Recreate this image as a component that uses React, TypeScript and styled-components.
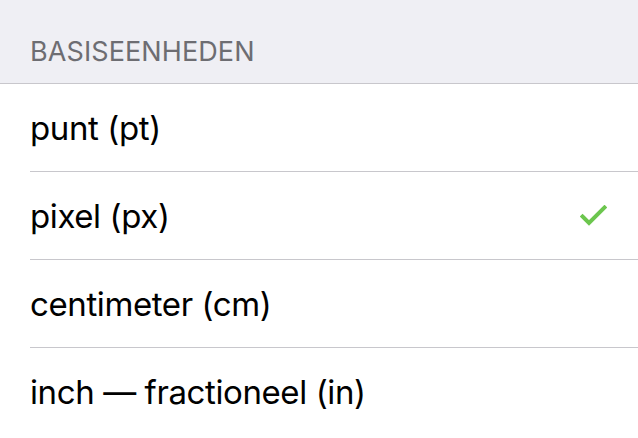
import React from "react";
import styled, { createGlobalStyle } from "styled-components";

const Global = createGlobalStyle`
  html, body {
    margin: 0;
    padding: 0;
    background: #ffffff;
  }
  body {
    font-family: Inter, "Liberation Sans", Arial, sans-serif;
    -webkit-font-smoothing: antialiased;
  }
`;

const Screen = styled.div`
  width: 638px;
  height: 438px;
  overflow: hidden;
  background: #ffffff;
`;

const SectionHeader = styled.div`
  height: 84px;
  box-sizing: border-box;
  background: #efeff4;
  border-bottom: 1px solid #c8c7cc;
  padding: 0 30px 15px;
  display: flex;
  align-items: flex-end;
  font-size: 27px;
  letter-spacing: 0.1px;
  color: #6d6d72;
  text-transform: uppercase;
`;

const List = styled.ul`
  list-style: none;
  margin: 0;
  padding: 0 0 0 30px;
  background: #ffffff;
`;

const Row = styled.li`
  height: 88px;
  box-sizing: border-box;
  display: flex;
  align-items: center;
  justify-content: space-between;
  padding-right: 31px;
  border-bottom: 1px solid #c8c7cc;
  &:last-child {
    border-bottom: none;
  }
`;

const Label = styled.span`
  font-size: 33px;
  letter-spacing: -0.4px;
  color: #000000;
`;

const Check = () => (
  <svg width="27" height="21" viewBox="0 0 27 21" fill="none">
    <path
      d="M2.5 11.5 L9 18 L24.5 2.5"
      stroke="#6cc64e"
      strokeWidth="4"
      strokeLinecap="square"
    />
  </svg>
);

const units = [
  { label: "punt (pt)", selected: false },
  { label: "pixel (px)", selected: true },
  { label: "centimeter (cm)", selected: false },
  { label: "inch — fractioneel (in)", selected: false },
];

export default function App() {
  return (
    <Screen>
      <Global />
      <SectionHeader>Basiseenheden</SectionHeader>
      <List>
        {units.map((u) => (
          <Row key={u.label}>
            <Label>{u.label}</Label>
            {u.selected && <Check />}
          </Row>
        ))}
      </List>
    </Screen>
  );
}
